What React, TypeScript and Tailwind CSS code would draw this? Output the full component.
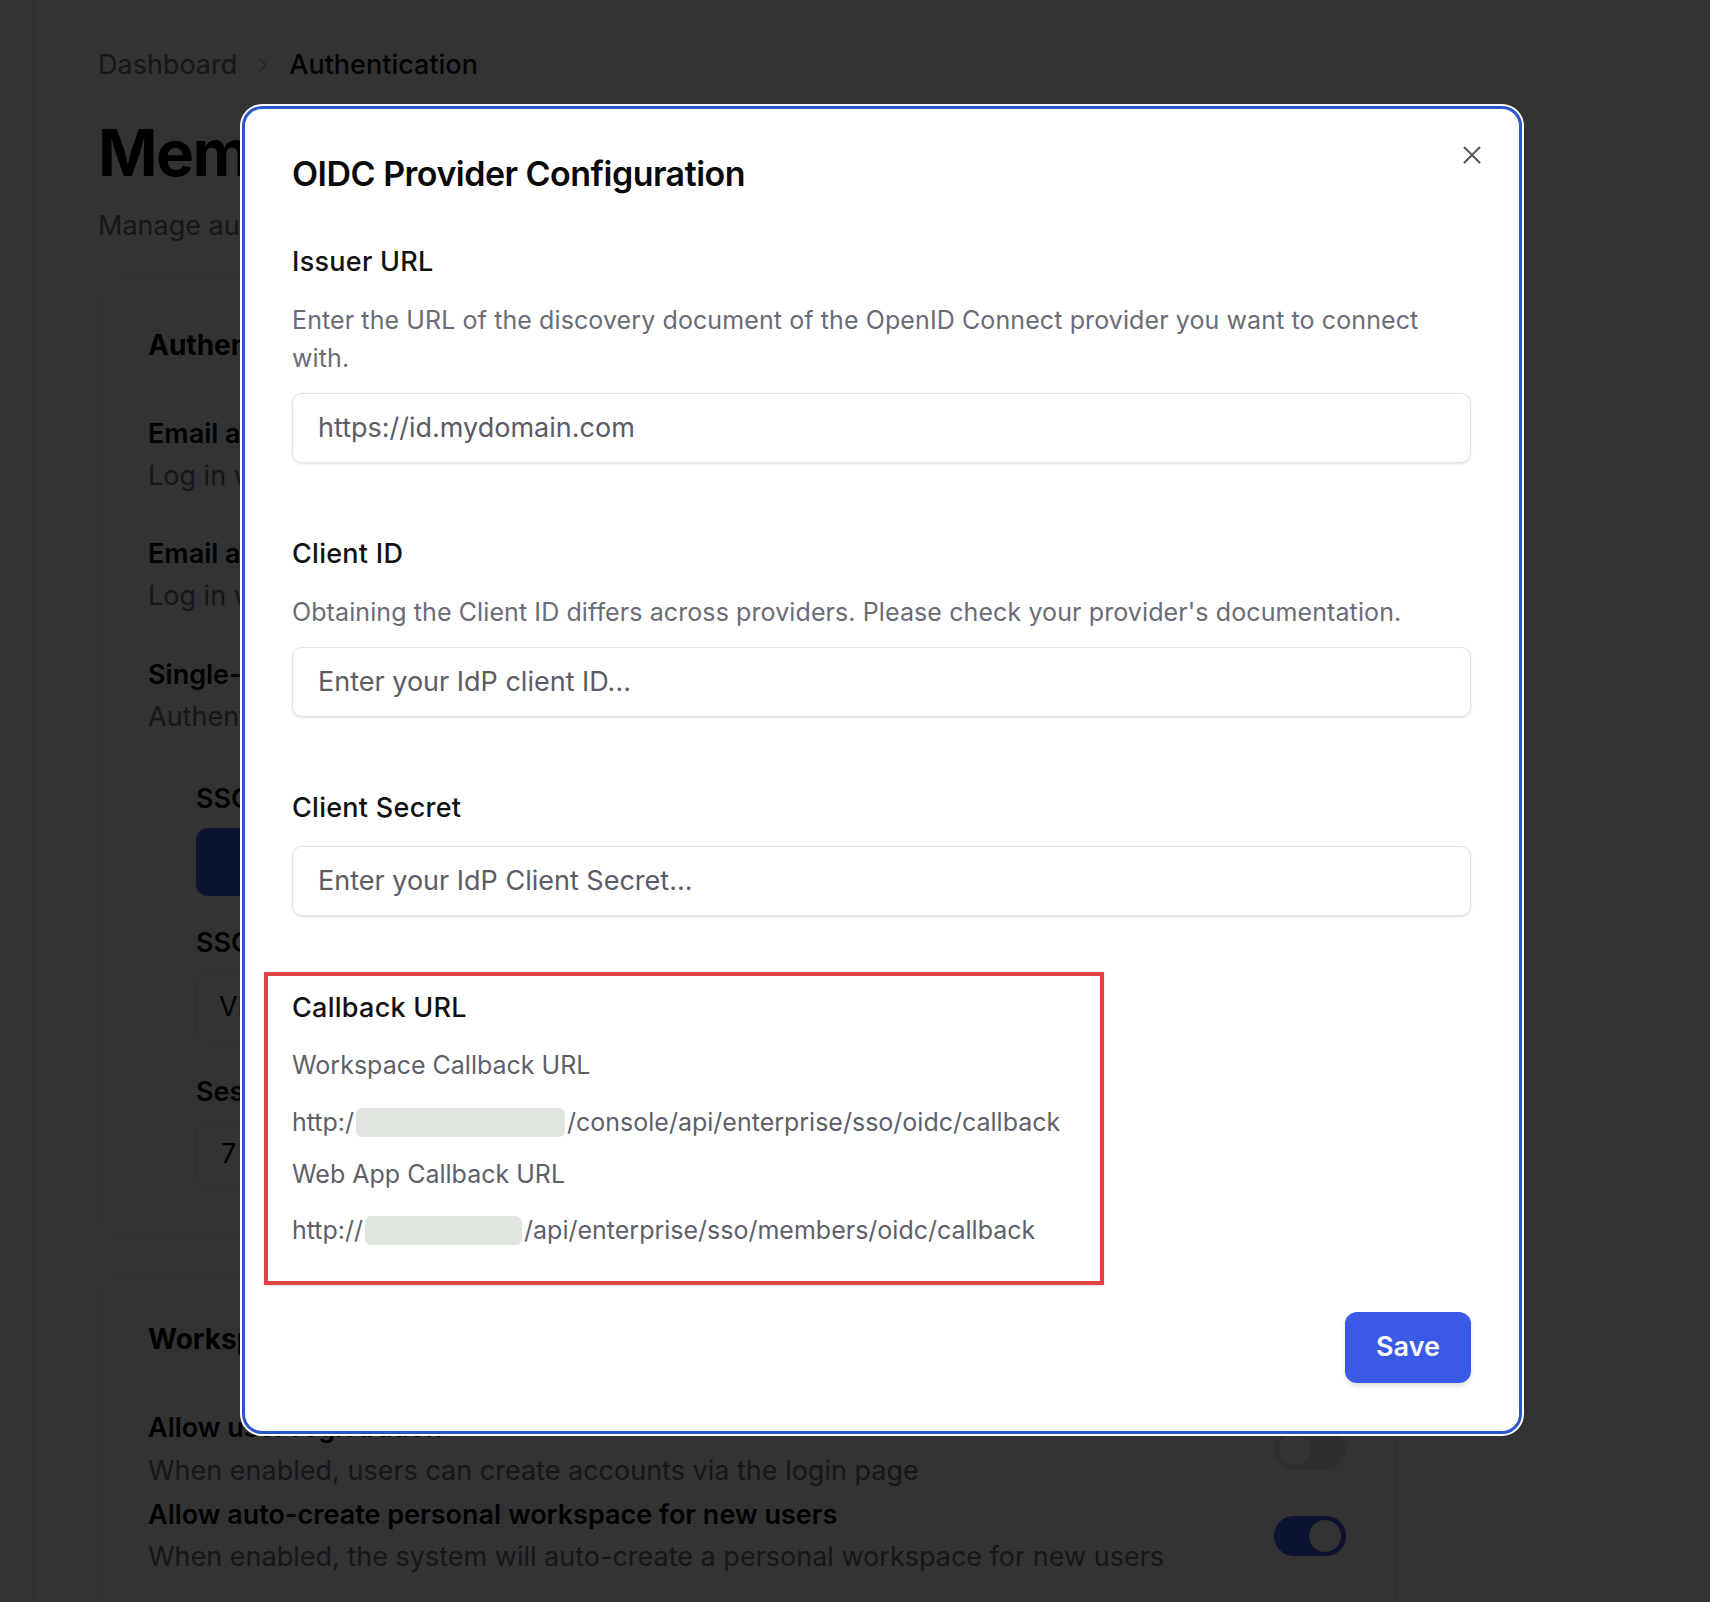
import { ChevronRight, X } from 'lucide-react';

function Toggle({ on }: { on: boolean }) {
  return (
    <div
      className={
        on
          ? 'flex h-[40px] w-[72px] items-center justify-end rounded-full bg-[#3b63f2] p-[5px]'
          : 'flex h-[40px] w-[72px] items-center justify-start rounded-full bg-[#e5e7eb] p-[5px]'
      }
    >
      <div className="h-[32px] w-[32px] rounded-full bg-white shadow" />
    </div>
  );
}

function Field({
  label,
  description,
  placeholder,
  first,
}: {
  label: string;
  description?: string;
  placeholder: string;
  first?: boolean;
}) {
  return (
    <div className={first ? 'mt-[52px]' : 'mt-[75px]'}>
      <div className="text-[27px] font-medium leading-[32px] tracking-[0.01em] text-[#111111]">{label}</div>
      {description && (
        <p className="mt-[23px] text-[25px] leading-[38px] tracking-[0.004em] text-[#6b6b76]">{description}</p>
      )}
      <div
        className={
          (description ? 'mt-[16px] ' : 'mt-[22px] ') +
          'flex h-[70px] items-center rounded-[10px] border-[1.5px] border-[#e2e2e5] px-[25px] text-[27px] text-[#5b5b66] shadow-sm'
        }
      >
        {placeholder}
      </div>
    </div>
  );
}

function Redacted({ width }: { width: string }) {
  return <span className={'mx-[2px] inline-block h-[29px] translate-y-[6px] rounded-md bg-[#e1e5e0] blur-[0.5px] ' + width} />;
}

export default function App() {
  return (
    <div className="relative min-h-[1602px] w-full overflow-hidden bg-white font-['Inter','Noto_Sans',sans-serif]">
      {/* Page behind the dialog */}
      <div className="flex">
        <aside className="min-h-[1602px] w-[34px] shrink-0 border-r border-[#e5e7eb]" />
        <main className="pl-[64px]">
          <nav className="flex items-center gap-[14px] pt-[49px] text-[27px] leading-[32px]">
            <span className="text-[#6b7280]">Dashboard</span>
            <ChevronRight size={24} strokeWidth={1.5} className="text-[#9ca3af]" />
            <span className="font-medium text-[#111827]">Authentication</span>
          </nav>
          <h1 className="mt-[36px] text-[64px] font-bold leading-[72px] tracking-tight text-black">
            Member Authentication
          </h1>
          <p className="mt-[21px] text-[27px] leading-[32px] text-[#6b7280]">
            Manage authentication settings for workspace members
          </p>

          <section className="mt-[36px] w-[1298px] rounded-[28px] border border-[#e5e7eb] px-[49px] pb-[48px] pt-[48px]">
            <h2 className="text-[28px] font-bold leading-[36px] text-black">Authentication Methods</h2>
            <div className="mt-[55px] text-[27px] font-semibold leading-[32px] text-black">Email and password</div>
            <div className="mt-[10px] text-[27px] leading-[32px] text-[#6b7280]">Log in with email and password</div>
            <div className="mt-[46px] text-[27px] font-semibold leading-[32px] text-black">Email and verification code</div>
            <div className="mt-[10px] text-[27px] leading-[32px] text-[#6b7280]">Log in with a one-time code sent by email</div>
            <div className="mt-[47px] text-[27px] font-semibold leading-[32px] text-black">Single-Sign-On (SSO)</div>
            <div className="mt-[10px] text-[27px] leading-[32px] text-[#6b7280]">Authenticate with your identity provider</div>
            <div className="ml-[48px]">
              <div className="mt-[50px] text-[27px] font-semibold leading-[32px] text-black">SSO Protocol</div>
              <div className="mt-[13px] flex h-[68px] w-[200px] items-center justify-center rounded-xl bg-[#3b63f2] text-[27px] font-semibold text-white">
                None
              </div>
              <div className="mt-[31px] text-[27px] font-semibold leading-[32px] text-black">SSO Settings</div>
              <div className="mt-[13px] flex h-[71px] w-[300px] items-center rounded-xl border border-[#e5e7eb] px-[22px] text-[27px] text-black">
                View configuration
              </div>
              <div className="mt-[33px] text-[27px] font-semibold leading-[32px] text-black">Session timeout</div>
              <div className="mt-[12px] flex h-[69px] w-[300px] items-center rounded-xl border border-[#e5e7eb] px-[24px] text-[27px] text-black">
                7
              </div>
            </div>
          </section>

          <section className="mt-[34px] w-[1298px] rounded-[28px] border border-[#e5e7eb] px-[49px] pb-[48px] pt-[48px]">
            <h2 className="text-[28px] font-bold leading-[36px] text-black">Workspace Settings</h2>
            <div className="mt-[55px] flex items-center justify-between">
              <div>
                <div className="text-[27px] font-semibold leading-[32px] text-black">Allow user registration</div>
                <div className="mt-[11px] text-[27px] leading-[32px] text-[#6b7280]">
                  When enabled, users can create accounts via the login page
                </div>
              </div>
              <Toggle on={false} />
            </div>
            <div className="mt-[12px] flex items-center justify-between">
              <div>
                <div className="text-[27px] font-semibold leading-[32px] text-black">
                  Allow auto-create personal workspace for new users
                </div>
                <div className="mt-[10px] text-[27px] leading-[32px] text-[#6b7280]">
                  When enabled, the system will auto-create a personal workspace for new users
                </div>
              </div>
              <Toggle on={true} />
            </div>
          </section>
        </main>
      </div>

      {/* Overlay */}
      <div className="absolute inset-0 bg-black/80" />

      {/* Dialog */}
      <div className="absolute left-[242px] top-[106px] w-[1280px] rounded-[20px] border-[3px] border-[#2c55cc] bg-white pb-[48px] pl-[47px] pr-[48px] pt-[45px] shadow-[0_0_0_2px_#ffffff]">
        <button className="absolute right-[32px] top-[31px] text-[#555]">
          <X size={30} strokeWidth={1.6} />
        </button>
        <h3 className="text-[34px] font-semibold leading-[40px] tracking-[-0.015em] text-[#0a0a0a]">
          OIDC Provider Configuration
        </h3>

        <Field
          first
          label="Issuer URL"
          description="Enter the URL of the discovery document of the OpenID Connect provider you want to connect with."
          placeholder="https://id.mydomain.com"
        />
        <Field
          label="Client ID"
          description="Obtaining the Client ID differs across providers. Please check your provider's documentation."
          placeholder="Enter your IdP client ID..."
        />
        <Field label="Client Secret" placeholder="Enter your IdP Client Secret..." />

        <div className="ml-[-28px] mt-[56px] w-[840px] border-4 border-[#e04343] pb-[35px] pl-[24px] pt-[16px] shadow-sm">
          <div className="text-[27px] font-medium leading-[32px] tracking-[0.01em] text-[#111111]">Callback URL</div>
          <div className="mt-[25px] text-[25px] leading-[32px] text-[#5f5f6a]">Workspace Callback URL</div>
          <div className="mt-[21px] whitespace-nowrap text-[25px] leading-[32px] text-[#5f5f6a]">
            http:/<Redacted width="w-[209px]" />/console/api/enterprise/sso/oidc/callback
          </div>
          <div className="mt-[20px] text-[25px] leading-[32px] text-[#5f5f6a]">Web App Callback URL</div>
          <div className="mt-[20px] whitespace-nowrap text-[25px] leading-[32px] text-[#5f5f6a]">
            http://<Redacted width="w-[157px]" />/api/enterprise/sso/members/oidc/callback
          </div>
        </div>

        <div className="mt-[27px] flex justify-end">
          <button className="h-[71px] w-[126px] rounded-xl bg-[#3a5ae5] text-[27px] font-semibold text-white shadow-md">
            Save
          </button>
        </div>
      </div>
    </div>
  );
}
